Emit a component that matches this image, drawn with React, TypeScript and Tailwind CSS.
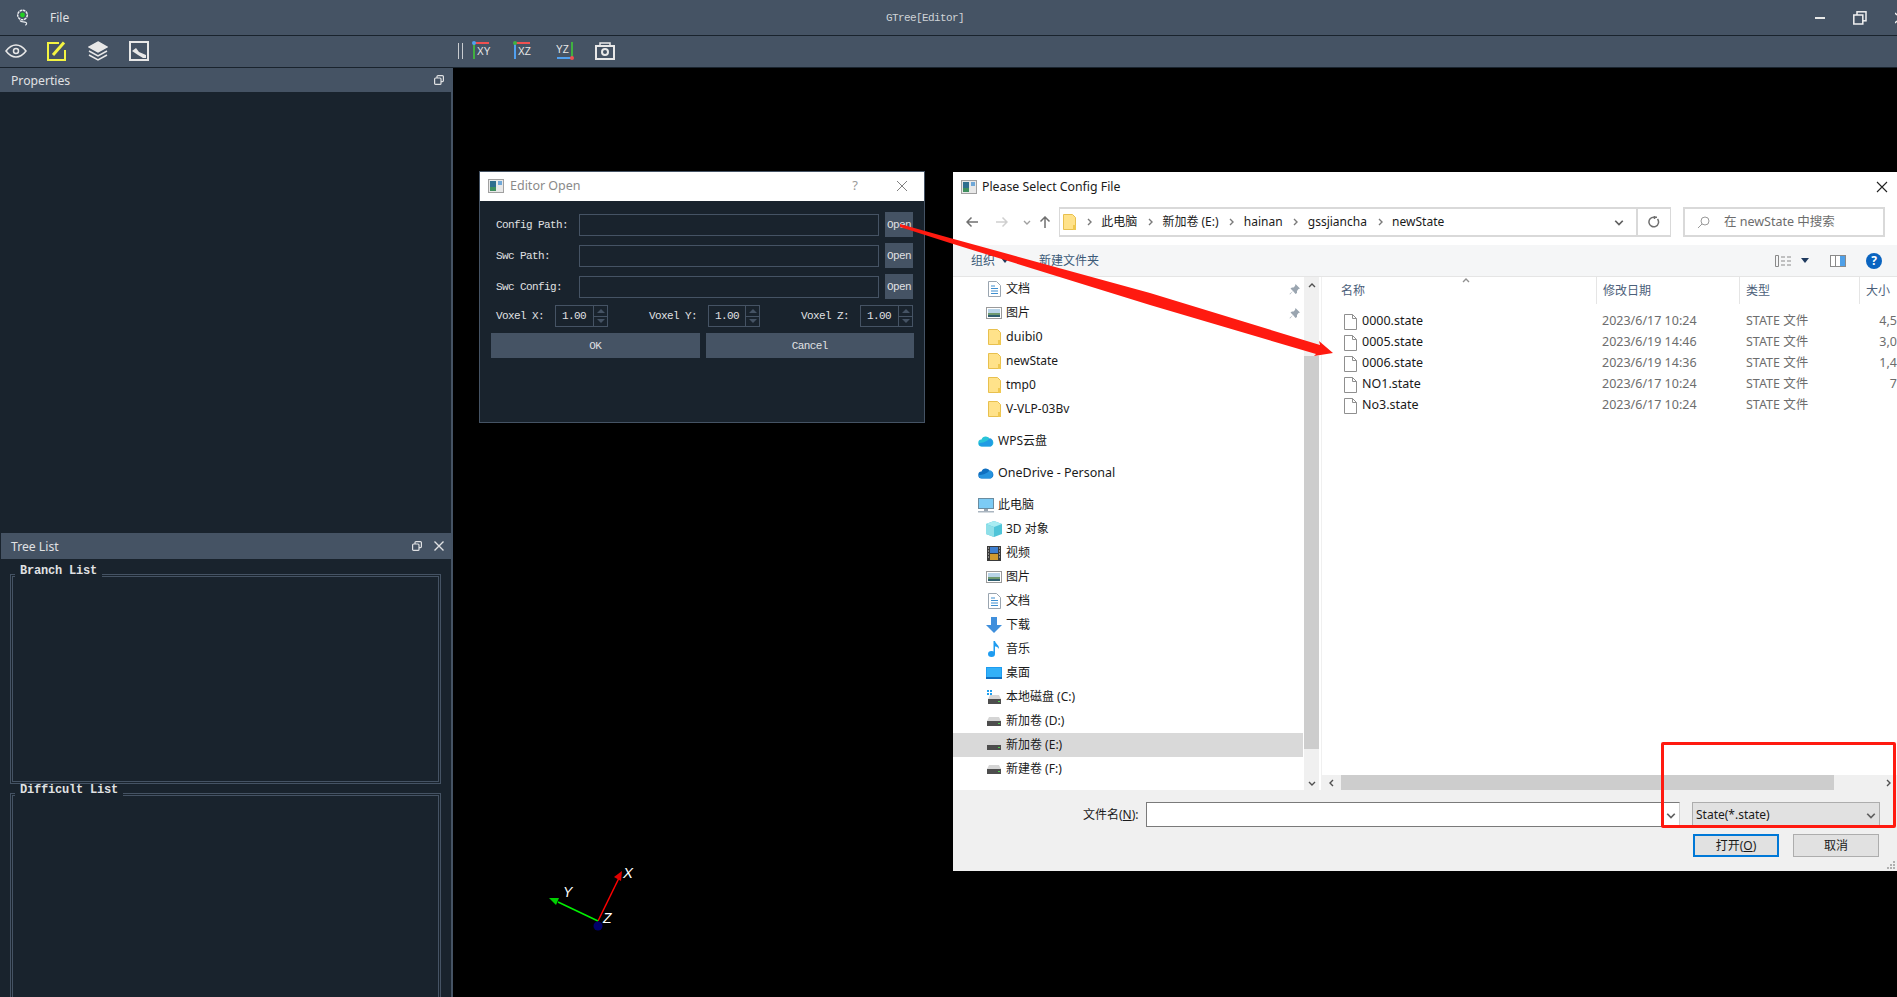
import { ReactNode } from "react";

const WindowIcon = () => (
    <svg width="16" height="14" viewBox="0 0 16 14">
        <rect x="0.5" y="0.5" width="15" height="13" fill="#e8e8e8" stroke="#a0a0a0" />
        <rect x="2" y="2" width="6" height="10" fill="#2f6f8f" />
        <rect x="2" y="8" width="6" height="4" fill="#3f8f5f" />
        <rect x="10" y="2" width="4" height="4" fill="#6fa8d8" />
    </svg>
);

const Chev = ({ dir = "right", color = "#7a7a7a", size = 8 }: { dir?: "right" | "left" | "up" | "down"; color?: string; size?: number }) => {
    const d = { right: "M3 1l3 3-3 3", left: "M5 1L2 4l3 3", up: "M1 5l3-3 3 3", down: "M1 3l3 3 3-3" }[dir];
    return (
        <svg width={size} height={size} viewBox="0 0 8 8" fill="none" stroke={color} strokeWidth="1.4">
            <path d={d} />
        </svg>
    );
};

const Folder = () => (
    <svg width="13" height="16" viewBox="0 0 13 16">
        <path d="M.5.5h9l3 3v12H.5z" fill="#ffe28a" stroke="#e8c04e" />
        <rect x="10" y="11" width="3" height="5" fill="#f0c850" />
    </svg>
);

const DocIcon = () => (
    <svg width="13" height="16" viewBox="0 0 13 16" fill="none">
        <path d="M.5.5h8l4 4v11H.5z" fill="#fff" stroke="#9aa5b0" />
        <path d="M3 5h4M3 7.5h7M3 10h7M3 12.5h7" stroke="#3f8fd0" />
    </svg>
);

const PicIcon = () => (
    <svg width="16" height="12" viewBox="0 0 16 12">
        <rect x="0.5" y="0.5" width="15" height="11" fill="#fff" stroke="#9a9a9a" />
        <rect x="2" y="2" width="12" height="4" fill="#b8d4e8" />
        <rect x="2" y="6" width="12" height="2" fill="#6f9a70" />
        <rect x="2" y="8" width="12" height="2" fill="#2f5f6f" />
    </svg>
);

const Drive = () => (
    <svg width="14" height="9" viewBox="0 0 14 9">
        <path d="M2 0h10l2 4H0z" fill="#d5d5d5" />
        <rect y="4" width="14" height="5" fill="#4d4d4d" />
        <rect x="11" y="6" width="2" height="1" fill="#4fd04f" />
    </svg>
);

const Cloud = ({ color, to }: { color: string; to: string }) => (
    <svg width="16" height="12" viewBox="0 0 16 12">
        <path d="M4 11.5a3.5 3.5 0 0 1-.5-7A4.6 4.6 0 0 1 12 4a3.8 3.8 0 0 1 .3 7.5z" fill={color} />
        <path d="M1 8c3 0 8-1 11-5 3 1 4 5 1 8.5H4C2 11.5 1 10 1 8z" fill={to} opacity="0.75" />
    </svg>
);

const Monitor = () => (
    <svg width="16" height="15" viewBox="0 0 16 15">
        <rect x="0.5" y="0.5" width="15" height="10" fill="#7ccbf5" stroke="#6a8ca0" />
        <rect x="6" y="11" width="4" height="2" fill="#9aa5b0" />
        <rect y="13" width="16" height="1.5" fill="#aab5c0" />
    </svg>
);

const Cube = () => (
    <svg width="16" height="16" viewBox="0 0 16 16">
        <path d="M8 0l8 3v10l-8 3-8-3V3z" fill="#4fc4d8" />
        <path d="M8 0l8 3-8 3-8-3z" fill="#a8ecf2" />
        <path d="M0 3l8 3v10l-8-3z" fill="#8fdfe8" />
    </svg>
);

const Film = () => (
    <svg width="14" height="15" viewBox="0 0 14 15">
        <rect width="14" height="15" fill="#3a3a3a" />
        <rect x="3" y="1" width="8" height="6" fill="#3f7fd0" />
        <rect x="3" y="8" width="8" height="6" fill="#d09a30" />
        <path d="M1 2h1M1 5h1M1 8h1M1 11h1M12 2h1M12 5h1M12 8h1M12 11h1" stroke="#ddd" />
    </svg>
);

const DownArrow = () => (
    <svg width="16" height="16" viewBox="0 0 16 16">
        <path d="M5 0h6v8h5l-8 8-8-8h5z" fill="#3f8fdc" />
    </svg>
);

const Note = () => (
    <svg width="12" height="16" viewBox="0 0 12 16">
        <ellipse cx="3.5" cy="13" rx="3.5" ry="3" fill="#1e9cf0" />
        <path d="M5.5 0h1.5c.5 3 4.5 4 4 8-1-2-3-2.500-4-2.500V13h-1.500z" fill="#1e9cf0" />
    </svg>
);

const Desktop = () => (
    <svg width="16" height="12" viewBox="0 0 16 12">
        <rect width="16" height="12" fill="#1e9cf0" />
        <rect x="1" y="1" width="14" height="9" fill="#32b0f8" />
        <rect x="0" y="10" width="16" height="2" fill="#0f6fc0" />
    </svg>
);

const SysDrive = () => (
    <svg width="15" height="14" viewBox="0 0 15 14">
        <path d="M0 0h2v2H0zM3 0h2v2H3zM0 3h2v2H0zM3 3h2v2H3z" fill="#1ea0f0" />
        <path d="M3 5h9l2 4H1z" fill="#d5d5d5" />
        <rect x="1" y="9" width="13" height="5" fill="#4d4d4d" />
        <rect x="11" y="11" width="2" height="1" fill="#4fd04f" />
    </svg>
);

const Pin = () => (
    <svg width="11" height="11" viewBox="0 0 11 11" fill="#9aa5b0">
        <path d="M6.500 0L11 4.500 9.500 5 8 7v2L6.500 10 4 7 1 10.500.5 10 4 7 1.500 4.500 3 3.500h1.500L6 2z" />
    </svg>
);

const FileIcon = () => (
    <svg width="13" height="16" viewBox="0 0 13 16" fill="none">
        <path d="M.5.5h8l4 4v11H.5z" fill="#fff" stroke="#8f8f8f" />
        <path d="M8.500.5v4h4" stroke="#8f8f8f" />
    </svg>
);

const NavRow = ({ icon, label, level = 1, pinned, selected, wide, className = "" }: { icon: ReactNode; label: string; level?: number; pinned?: boolean; selected?: boolean; wide?: boolean; className?: string }) => (
    <div className={`h-6 flex items-center text-[#1a1a1a] shrink-0 ${selected ? "bg-[#d9d9d9]" : ""} ${className}`}>
        <div className={`flex items-center justify-center w-4 ${level === 0 ? "ml-[25px] mr-[4px]" : "ml-[33px] mr-[4px]"}`}>{icon}</div>
        <span className={`flex-1 ${wide ? "text-[12.5px]" : "text-[12px]"}`}>{label}</span>
        {pinned && <span className="mr-[3px] flex"><Pin /></span>}
    </div>
);

const files = [
    { name: "0000.state", date: "2023/6/17 10:24", size: "4,5" },
    { name: "0005.state", date: "2023/6/19 14:46", size: "3,0" },
    { name: "0006.state", date: "2023/6/19 14:36", size: "1,4" },
    { name: "NO1.state", date: "2023/6/17 10:24", size: "7" },
    { name: "No3.state", date: "2023/6/17 10:24", size: "" },
];

const FileDialog = () => (
    <div className="absolute left-[953px] top-[172px] w-[944px] h-[699px] bg-white flex flex-col font-['Noto_Sans','Noto_Sans_CJK_SC',sans-serif]">
        {/* Title */}
        <div className="h-[35px] shrink-0 flex items-center pl-2 pr-[8px] pb-[5px] text-[12.3px] text-[#1a1a1a]">
            <WindowIcon />
            <span className="ml-[5px] flex-1">Please Select Config File</span>
            <svg width="14" height="14" viewBox="0 0 14 14" stroke="#222" strokeWidth="1.1"><path d="M2 2l10 10M12 2L2 12" /></svg>
        </div>

        {/* Address row */}
        <div className="h-[30px] shrink-0 flex items-center text-[12px] text-[#1a1a1a]">
            <div className="w-[106px] flex items-center pl-[13px]">
                <svg width="12" height="12" viewBox="0 0 12 12" fill="none" stroke="#707070" strokeWidth="1.500"><path d="M12 6H1M5.500 1.500L1 6l4.500 4.500" /></svg>
                <svg className="ml-[18px]" width="12" height="12" viewBox="0 0 12 12" fill="none" stroke="#cfcfcf" strokeWidth="1.500"><path d="M0 6h11M6.500 1.500L11 6l-4.500 4.500" /></svg>
                <span className="ml-[15px] flex"><Chev dir="down" color="#a0a0a0" /></span>
                <svg className="ml-[8px]" width="12" height="12" viewBox="0 0 12 12" fill="none" stroke="#707070" strokeWidth="1.500"><path d="M6 12V1M1.500 5.500L6 1l4.500 4.500" /></svg>
            </div>
            <div className="w-[612px] h-full border-2 border-[#d9d9d9] flex items-center pl-[3px] gap-[8.6px] border-x-[1.5px]">
                <Folder />
                <span className="flex"><Chev /></span>
                <span>此电脑</span>
                <Chev />
                <span>新加卷 (E:)</span>
                <Chev />
                <span>hainan</span>
                <Chev />
                <span>gssjiancha</span>
                <Chev />
                <span>newState</span>
                <span className="flex-1" />
                <span className="flex mr-[3px]"><Chev dir="down" color="#606060" size={10} /></span>
                <div className="w-[34px] h-full border-l-2 border-[#d9d9d9] flex items-center justify-center">
                    <svg width="12" height="12" viewBox="0 0 12 12" fill="none" stroke="#707070" strokeWidth="1.500"><path d="M9.500 3A4.800 4.800 0 1 1 6 1.200H9M6.500 0v3" /></svg>
                </div>
            </div>
            <div className="ml-[12px] w-[202px] h-full border-2 border-[#d9d9d9] flex items-center pl-[12px] text-[12.5px] text-[#6d6d6d]">
                <svg width="13" height="13" viewBox="0 0 13 13" fill="none" stroke="#9a9a9a"><circle cx="8" cy="5" r="4" /><path d="M5 8l-4 4" /></svg>
                <span className="ml-[14px]">在 newState 中搜索</span>
            </div>
        </div>

        <div className="h-[8px] shrink-0" />

        {/* Command bar */}
        <div className="h-[32px] shrink-0 bg-[#f5f6f7] border-b border-[#e5e5e5] flex items-center text-[12px] text-[#3c5a78]">
            <span className="ml-[18px]">组织</span>
            <svg className="ml-[6px]" width="8" height="5" viewBox="0 0 8 5" fill="#1f3a5f"><path d="M0 0h8L4 5z" /></svg>
            <span className="ml-[30px] flex-1">新建文件夹</span>
            <svg width="16" height="12" viewBox="0 0 16 12" fill="none" stroke="#8a8a8a"><path d="M.5.500h3v11h-3zM6 2h4M6 6h4M6 10h4M12 2h4M12 6h4M12 10h4" /></svg>
            <svg className="ml-[10px]" width="8" height="5" viewBox="0 0 8 5" fill="#1f3a5f"><path d="M0 0h8L4 5z" /></svg>
            <svg className="ml-[21px]" width="16" height="12" viewBox="0 0 16 12"><rect x="0.500" y="0.500" width="15" height="11" fill="#fff" stroke="#8a8a8a" /><rect x="10" y="1" width="5" height="10" fill="#4fa0e8" /><rect x="5" y="1" width="1" height="10" fill="#8a8a8a" /></svg>
            <div className="ml-[20px] mr-[15px] w-4 h-4 rounded-full bg-[#0a64c0] text-white text-[12px] font-bold flex items-center justify-center">?</div>
        </div>

        {/* Panes */}
        <div className="h-[513px] shrink-0 flex">
            <div className="w-[350px] shrink-0 flex flex-col pt-0">
                <NavRow icon={<DocIcon />} label="文档" pinned />
                <NavRow icon={<PicIcon />} label="图片" pinned />
                <NavRow icon={<Folder />} label="duibi0" wide />
                <NavRow icon={<Folder />} label="newState" />
                <NavRow icon={<Folder />} label="tmp0" />
                <NavRow icon={<Folder />} label="V-VLP-03Bv" />
                <NavRow icon={<Cloud color="#29c4d8" to="#1e8fe8" />} label="WPS云盘" level={0} className="mt-2" />
                <NavRow icon={<Cloud color="#0f6fc0" to="#2f9fe8" />} label="OneDrive - Personal" level={0} wide className="mt-2" />
                <NavRow icon={<Monitor />} label="此电脑" level={0} className="mt-2" />
                <NavRow icon={<Cube />} label="3D 对象" />
                <NavRow icon={<Film />} label="视频" />
                <NavRow icon={<PicIcon />} label="图片" />
                <NavRow icon={<DocIcon />} label="文档" />
                <NavRow icon={<DownArrow />} label="下载" />
                <NavRow icon={<Note />} label="音乐" />
                <NavRow icon={<Desktop />} label="桌面" />
                <NavRow icon={<SysDrive />} label="本地磁盘 (C:)" />
                <NavRow icon={<Drive />} label="新加卷 (D:)" />
                <NavRow icon={<Drive />} label="新加卷 (E:)" selected />
                <NavRow icon={<Drive />} label="新建卷 (F:)" />
            </div>
            <div className="w-[15px] shrink-0 bg-[#f0f0f0] flex flex-col items-center ml-px">
                <div className="h-[18px] shrink-0 flex items-center justify-center"><Chev dir="up" color="#505050" /></div>
                <div className="h-[61px] shrink-0" />
                <div className="h-[393px] w-full shrink-0 bg-[#cdcdcd]" />
                <div className="flex-1 flex items-end justify-center pb-[3px]"><Chev dir="down" color="#505050" /></div>
            </div>
            <div className="w-[3px] shrink-0 border-r border-[#f0f0f0]" />
            <div className="flex-1 flex flex-col relative min-w-0">
                <span className="absolute left-[140px] top-0 flex"><Chev dir="up" color="#909090" /></span>
                <div className="h-[27px] shrink-0 grid grid-cols-[274px_143px_120px_38px] text-[12px] text-[#4c607a]">
                    <div className="pl-[19px] flex items-center">名称</div>
                    <div className="pl-[6px] flex items-center border-l border-[#e5e5e5]">修改日期</div>
                    <div className="pl-[6px] flex items-center border-l border-[#e5e5e5]">类型</div>
                    <div className="pl-[6px] flex items-center border-l border-[#e5e5e5]">大小</div>
                </div>
                <div className="mt-[7px] flex-1">
                    {files.map((f) => (
                        <div key={f.name} className="h-[21px] grid grid-cols-[274px_143px_120px_38px] items-center text-[12.5px] text-[#6d6d6d]">
                            <div className="pl-[22px] flex items-center gap-[5px] text-[#1a1a1a]"><FileIcon />{f.name}</div>
                            <div className="pl-[6px]">{f.date}</div>
                            <div className="pl-[7px]">STATE 文件</div>
                            <div className="text-right">{f.size}</div>
                        </div>
                    ))}
                </div>
                <div className="h-[15px] shrink-0 bg-[#f0f0f0] flex items-center">
                    <div className="w-[19px] flex justify-center"><Chev dir="left" color="#505050" /></div>
                    <div className="w-[493px] h-full bg-[#cdcdcd]" />
                    <div className="flex-1 flex justify-end pr-[5px]"><Chev color="#505050" /></div>
                </div>
            </div>
        </div>

        {/* Footer */}
        <div className="flex-1 bg-[#f0f0f0] relative">
            <div className="mt-[12px] h-[25px] flex items-center text-[12px] text-[#1a1a1a]">
                <span className="ml-[130px] w-[63px]">文件名(<u>N</u>):</span>
                <div className="w-[534px] h-full bg-white border border-[#7a7a7a] border-r-[#d0d0d0] flex items-center justify-end pr-[3px]">
                    <Chev dir="down" color="#606060" size={10} />
                </div>
                <div className="ml-[12px] w-[188px] h-full bg-[#e1e1e1] border border-[#adadad] flex items-center justify-between pl-[3px] pr-[3px]">
                    <span>State(*.state)</span>
                    <Chev dir="down" color="#606060" size={10} />
                </div>
            </div>
            <div className="mt-[7px] h-[23px] flex justify-end text-[12px] text-[#1a1a1a] pr-[18px] gap-[14px]">
                <div className="w-[86px] h-full bg-[#e1e1e1] border-2 border-[#0078d7] flex items-center justify-center">打开(<u>O</u>)</div>
                <div className="w-[86px] h-full bg-[#e1e1e1] border border-[#adadad] flex items-center justify-center">取消</div>
            </div>
            <svg className="absolute right-[2px] bottom-[1px]" width="9" height="9" viewBox="0 0 9 9" fill="#b0b0b0">
                <path d="M7 0h2v2H7zM4 3h2v2H4zM7 3h2v2H7zM1 6h2v2H1zM4 6h2v2H4zM7 6h2v2H7z" />
            </svg>
        </div>
    </div>
);

const PathRow = ({ label }: { label: string }) => (
    <div className="h-[25px] flex items-center">
        <span className="ml-[5px] w-[83px] pt-px">{label}</span>
        <div className="w-[300px] h-[22px] border border-[#455364]" />
        <div className="ml-[6px] w-[28px] h-full bg-[#455364] flex items-center justify-center pt-px">Open</div>
    </div>
);

const Spin = ({ className = "" }: { className?: string }) => (
    <div className={`h-[22px] border border-[#455364] flex items-center ${className}`}>
        <span className="flex-1 pl-[6px] pt-px">1.00</span>
        <div className="w-[14px] h-full border-l border-[#455364] flex flex-col">
            <div className="flex-1 border-b border-[#455364] flex items-center justify-center">
                <svg width="8" height="4" viewBox="0 0 8 4" fill="#455364"><path d="M0 4L4 0l4 4z" /></svg>
            </div>
            <div className="flex-1 flex items-center justify-center">
                <svg width="8" height="4" viewBox="0 0 8 4" fill="#455364"><path d="M0 0l4 4 4-4z" /></svg>
            </div>
        </div>
    </div>
);

const EditorDialog = () => (
    <div className="absolute left-[479px] top-[171px] w-[446px] h-[252px] border border-[#455364] bg-[#19232d] flex flex-col">
        <div className="h-[29px] shrink-0 bg-white flex items-center pl-[8px] pr-[16px] pb-px text-[12.5px] text-[#8a8a8a] font-['Noto_Sans',sans-serif]">
            <WindowIcon />
            <span className="ml-[6px] flex-1">Editor Open</span>
            <span className="mr-[38px] text-[13px] text-[#9a9a9a]">?</span>
            <svg width="12" height="12" viewBox="0 0 12 12" stroke="#808080"><path d="M1 1l10 10M11 1L1 11" /></svg>
        </div>
        <div className="pt-[11px] pl-[11px] pr-[10px] flex flex-col gap-[6px] text-[11px] tracking-[-0.6px] text-[#e0e1e3] font-['Liberation_Mono',monospace]">
            <PathRow label="Config Path:" />
            <PathRow label="Swc Path:" />
            <PathRow label="Swc Config:" />
            <div className="flex items-center gap-[41px] pl-[5px]">
                <div className="flex items-center"><span className="w-[59px] pt-px">Voxel X:</span><Spin className="w-[53px]" /></div>
                <div className="flex items-center"><span className="w-[59px] pt-px">Voxel Y:</span><Spin className="w-[52px]" /></div>
                <div className="flex items-center"><span className="w-[59px] pt-px">Voxel Z:</span><Spin className="w-[53px]" /></div>
            </div>
            <div className="flex gap-[6px]">
                <div className="flex-1 h-[25px] bg-[#455364] flex items-center justify-center pt-px">OK</div>
                <div className="flex-1 h-[25px] bg-[#455364] flex items-center justify-center pt-px">Cancel</div>
            </div>
        </div>
    </div>
);

const GroupBox = ({ title, className = "" }: { title: string; className?: string }) => (
    <div className={`relative mx-[10px] border border-[#455364] p-px ${className}`}>
        <div className="w-full h-full border border-[#455364]" />
        <span className="absolute left-[4px] top-[-9px] h-[11px] px-[5px] bg-[#19232d] text-[12px] leading-[11px] tracking-[-0.2px] font-bold text-[#e0e1e3] font-['Liberation_Mono',monospace]">
            {title}
        </span>
    </div>
);

const FloatIcon = () => (
    <svg width="10" height="10" viewBox="0 0 10 10" fill="none" stroke="#e0e1e3" strokeWidth="1.200">
        <rect x="3" y="0.600" width="6.400" height="6" rx="1" />
        <rect x="0.600" y="3" width="6.400" height="6.400" rx="1" fill="#455364" />
    </svg>
);

const LeftPanel = () => (
    <div className="w-[451px] shrink-0 bg-[#19232d] flex flex-col">
        <div className="h-6 shrink-0 bg-[#455364] flex items-center pl-[11px] pr-[7px] justify-between text-[12.2px] text-[#e0e1e3]">
            <span className="pt-[2px]">Properties</span>
            <FloatIcon />
        </div>
        <div className="h-[441px] shrink-0" />
        <div className="h-[26px] shrink-0 ml-px bg-[#455364] flex items-center pl-[10px] pr-[7px] text-[12.2px] text-[#e0e1e3]">
            <span className="flex-1 pt-[3px]">Tree List</span>
            <FloatIcon />
            <svg className="ml-[12px]" width="10" height="10" viewBox="0 0 10 10" stroke="#e0e1e3" strokeWidth="1.400"><path d="M.5.5l9 9M9.500.5l-9 9" /></svg>
        </div>
        <GroupBox title="Branch List" className="mt-[15px] h-[210px] shrink-0" />
        <GroupBox title="Difficult List" className="mt-[9px] h-[260px] shrink-0" />
    </div>
);

const Toolbar = () => (
    <div className="h-[31px] shrink-0 bg-[#455364] flex items-center pb-px">
        <svg className="ml-[5px]" width="22" height="14" viewBox="0 0 22 14" fill="none" stroke="#e8e8e8" strokeWidth="1.500">
            <path d="M1 7c3-4 6-6 10-6s7 2 10 6c-3 4-6 6-10 6S4 11 1 7z" />
            <circle cx="11" cy="7" r="2.500" />
        </svg>
        <svg className="ml-[20px]" width="20" height="20" viewBox="0 0 20 20" fill="none" stroke="#f4f442" strokeWidth="2">
            <path d="M12 2H1v17h17V9" />
            <path d="M6 14L17 1.500" strokeWidth="3" />
        </svg>
        <svg className="ml-[21px]" width="20" height="20" viewBox="0 0 20 20" fill="none" stroke="#e8e8e8" strokeWidth="1.500">
            <path d="M10 1l9 5-9 5-9-5z" fill="#e8e8e8" />
            <path d="M1 10l9 5 9-5M1 14l9 5 9-5" />
        </svg>
        <svg className="ml-[21px]" width="20" height="20" viewBox="0 0 20 20" fill="none">
            <rect x="1" y="1" width="18" height="18" stroke="#e8e8e8" strokeWidth="2" />
            <path d="M3 10l4-3 3 4 7 3v3h-3l-5-3z" fill="#e8e8e8" />
        </svg>
        <div className="ml-[309px] w-[5px] h-[16px] border-x border-[#c8ccd0]" />
        <svg className="ml-[9px]" width="20" height="20" viewBox="0 0 20 20" fill="none">
            <path d="M2 2h15" stroke="#f05050" strokeWidth="2" />
            <path d="M2 2v16" stroke="#40b040" strokeWidth="2" />
            <circle cx="2" cy="2" r="2" fill="#50a0f0" />
            <text x="5" y="14" fontSize="10" fill="#e8e8e8" fontFamily="Liberation Sans">XY</text>
        </svg>
        <svg className="ml-[21px]" width="20" height="20" viewBox="0 0 20 20" fill="none">
            <path d="M2 2h15" stroke="#f05050" strokeWidth="2" />
            <path d="M2 2v16" stroke="#50a0f0" strokeWidth="2" />
            <circle cx="2" cy="2" r="2" fill="#40b040" />
            <text x="5" y="14" fontSize="10" fill="#e8e8e8" fontFamily="Liberation Sans">XZ</text>
        </svg>
        <svg className="ml-[21px]" width="20" height="20" viewBox="0 0 20 20" fill="none">
            <path d="M18 17H3" stroke="#50a0f0" strokeWidth="2" />
            <path d="M18 17V1" stroke="#40b040" strokeWidth="2" />
            <circle cx="18" cy="17" r="2" fill="#f05050" />
            <text x="2" y="12" fontSize="10" fill="#e8e8e8" fontFamily="Liberation Sans">YZ</text>
        </svg>
        <svg className="ml-[21px]" width="20" height="20" viewBox="0 0 20 20" fill="none" stroke="#e8e8e8" strokeWidth="2">
            <path d="M1 5h18v13H1z" />
            <path d="M5 5V2h10v3" strokeWidth="1.500" />
            <circle cx="10" cy="11" r="3" />
        </svg>
    </div>
);

export default function App() {
    return (
        <div className="relative w-full h-screen overflow-hidden bg-black flex flex-col font-['Noto_Sans','Noto_Sans_CJK_SC',sans-serif]">
            {/* Title bar */}
            <div className="h-[35px] shrink-0 bg-[#455364] flex items-center relative text-[12px] text-[#e0e1e3]">
                <svg className="ml-[15px]" width="16" height="17" viewBox="0 0 16 17" fill="none" stroke="#e8ebee" strokeWidth="1.500">
                    <circle cx="7.500" cy="6" r="4.800" strokeDasharray="2.600 0.600" />
                    <circle cx="7.500" cy="6" r="2.400" fill="#22d022" stroke="none" />
                    <path d="M5 11.500c1 2 4 1 6 2 1.200 1 .5 2.500-1 2.500" strokeWidth="1.200" />
                </svg>
                <span className="ml-[19px]">File</span>
                <span className="absolute left-[886px] top-[10px] font-['Liberation_Mono',monospace] text-[11px] tracking-[-0.6px] text-[#cfd3d7]">GTree[Editor]</span>
                <div className="flex-1" />
                <div className="w-[10px] h-[2px] bg-[#e8e8e8] mr-[28px]" />
                <svg className="mr-[28px]" width="14" height="14" viewBox="0 0 14 14" fill="none" stroke="#f0f0f0" strokeWidth="1.500">
                    <rect x="4" y="0.800" width="9" height="9" />
                    <rect x="0.800" y="4" width="9" height="9" fill="#455364" />
                </svg>
                <svg width="2" height="12" viewBox="0 0 2 12" stroke="#f0f0f0" strokeWidth="1.500"><path d="M0 1l2 2M2 9l-2 2" /></svg>
            </div>
            <div className="h-px shrink-0 bg-[#19232d]" />
            <Toolbar />
            <div className="h-px shrink-0 bg-[#19232d]" />

            {/* Dock + canvas */}
            <div className="flex-1 flex min-h-0">
                <LeftPanel />
                <div className="w-[2px] shrink-0 bg-[#455364]" />
                <div className="flex-1 bg-black" />
            </div>

            <EditorDialog />
            <FileDialog />

            {/* Axis gizmo */}
            <svg className="absolute left-[540px] top-[860px]" width="110" height="80" viewBox="540 860 110 80" fill="none">
                <path d="M598 921L619 878" stroke="#ff0000" strokeWidth="1.500" />
                <path d="M622 871l-8 6 7 4z" fill="#e00000" />
                <path d="M598 921L558 902" stroke="#00f000" strokeWidth="1.500" />
                <path d="M549 898l10 0-3 7z" fill="#00d000" />
                <circle cx="598" cy="926" r="4.500" fill="#00006a" />
                <text x="623" y="878" fontSize="15" fontStyle="italic" fill="#fff" fontFamily="Liberation Sans">X</text>
                <text x="563" y="897" fontSize="14" fontStyle="italic" fill="#fff" fontFamily="Liberation Sans">Y</text>
                <text x="603" y="923" fontSize="14" fontStyle="italic" fill="#fff" fontFamily="Liberation Sans">Z</text>
            </svg>

            {/* Annotations drawn over the screenshot */}
            <svg className="absolute left-0 top-0 pointer-events-none" width="1897" height="997" viewBox="0 0 1897 997">
                <polygon points="900,224 950,238 1150,293 1320,345 1319,341 1333,353 1314,356 1316,354 1150,305 950,243 900,227" fill="#ff1a10" />
            </svg>
            <div className="absolute left-[1661px] top-[742px] w-[235px] h-[86px] border-[3px] border-[#ff1a10] rounded-[2px] pointer-events-none" />
        </div>
    );
}
